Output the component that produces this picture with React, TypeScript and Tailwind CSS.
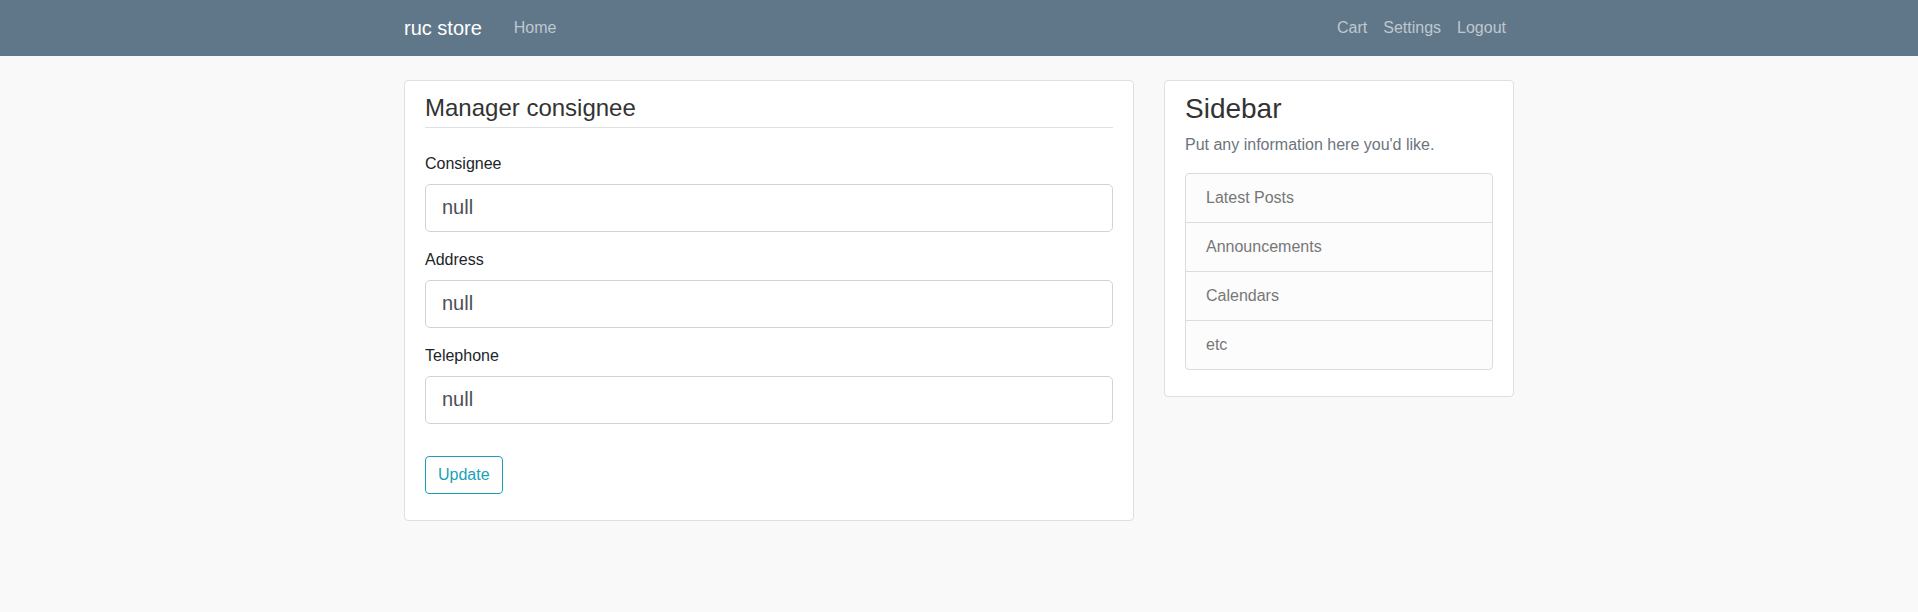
const fields = ["Consignee", "Address", "Telephone"];
const links = ["Latest Posts", "Announcements", "Calendars", "etc"];

export default function App() {
  return (
    <div className="min-h-screen bg-[#f9f9f9] font-['Liberation_Sans',Arial,sans-serif] text-[#212529]">
      <nav className="h-14 bg-[#5f7789]">
        <div className="mx-auto flex h-full w-[1110px] items-center justify-between">
          <div className="flex items-center">
            <a href="#" className="mr-6 text-xl leading-[30px] text-white">ruc store</a>
            <a href="#" className="px-2 text-base leading-6 text-white/60">Home</a>
          </div>
          <div className="flex items-center">
            <a href="#" className="px-2 text-base leading-6 text-white/60">Cart</a>
            <a href="#" className="px-2 text-base leading-6 text-white/60">Settings</a>
            <a href="#" className="px-2 text-base leading-6 text-white/60">Logout</a>
          </div>
        </div>
      </nav>

      <div className="mx-auto mt-6 flex w-[1110px] items-start gap-[30px]">
        <div className="w-[730px] rounded border border-[#dfdfdf] bg-white px-5 pt-[13px] pb-[26px]">
          <h4 className="border-b border-[#dee2e6] pb-1 text-2xl leading-[1.2] text-[#333]">Manager consignee</h4>
          <form className="mt-6">
            {fields.map((f) => (
              <div key={f} className="mb-4">
                <label className="mb-2 block text-base leading-6">{f}</label>
                <input
                  defaultValue="null"
                  className="block h-12 w-full rounded-[5px] border border-[#ced4da] bg-white px-4 text-xl text-[#495057] outline-none"
                />
              </div>
            ))}
            <button
              type="button"
              className="mt-4 h-[38px] rounded border border-[#17a2b8] px-3 text-base leading-6 text-[#17a2b8]"
            >
              Update
            </button>
          </form>
        </div>

        <div className="w-[350px] rounded border border-[#dfdfdf] bg-white px-5 pt-[11px] pb-[26px]">
          <h3 className="mb-[7px] text-[28px] leading-[1.2] text-[#333]">Sidebar</h3>
          <p className="mb-4 text-base leading-6 text-[#6c757d]">Put any information here you'd like.</p>
          <ul className="rounded border border-[#dcdcdc] bg-[#fcfcfc]">
            {links.map((l, i) => (
              <li
                key={l}
                className={`px-5 py-3 text-base leading-6 text-[#777] ${i > 0 ? "border-t border-[#dcdcdc]" : ""}`}
              >
                {l}
              </li>
            ))}
          </ul>
        </div>
      </div>
    </div>
  );
}
